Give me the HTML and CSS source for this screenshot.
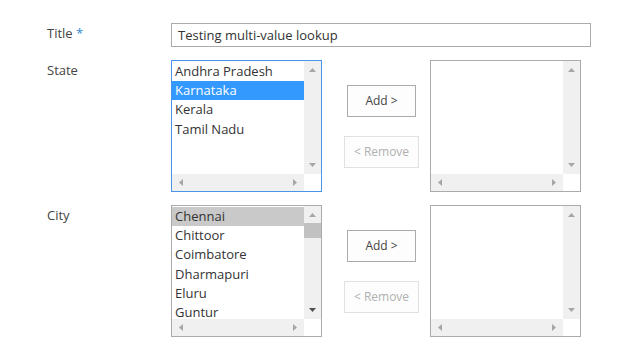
FILE: index.html
```html
<!DOCTYPE html>
<html>
<head>
<meta charset="utf-8">
<link rel="stylesheet" href="styles.css">
</head>
<body>
<div class="form">
  <div class="label label-title">Title <span class="req">*</span></div>
  <div class="field"><div class="textbox">Testing multi-value lookup</div></div>

  <div class="label">State</div>
  <div class="field picker">
    <div class="listbox focused">
      <div class="items">
        <div class="item">Andhra Pradesh</div>
        <div class="item sel-blue">Karnataka</div>
        <div class="item">Kerala</div>
        <div class="item">Tamil Nadu</div>
      </div>
      <div class="vbar">
        <svg class="arr" width="9" height="6" viewBox="0 0 9 6"><polygon points="4.5,1 8,5 1,5" fill="#a6a6a6"/></svg>
        <div class="track"></div>
        <svg class="arr" width="9" height="6" viewBox="0 0 9 6"><polygon points="1,1 8,1 4.5,5" fill="#a6a6a6"/></svg>
      </div>
      <div class="hbar">
        <svg class="arr" width="6" height="9" viewBox="0 0 6 9"><polygon points="1,4.5 5,1 5,8" fill="#a6a6a6"/></svg>
        <svg class="arr" width="6" height="9" viewBox="0 0 6 9"><polygon points="1,1 5,4.5 1,8" fill="#a6a6a6"/></svg>
      </div>
      <div class="corner"></div>
    </div>
    <div class="buttons">
      <div class="btn add">Add &gt;</div>
      <div class="btn remove">&lt; Remove</div>
    </div>
    <div class="listbox">
      <div class="items"></div>
      <div class="vbar">
        <svg class="arr" width="9" height="6" viewBox="0 0 9 6"><polygon points="4.5,1 8,5 1,5" fill="#a6a6a6"/></svg>
        <div class="track"></div>
        <svg class="arr" width="9" height="6" viewBox="0 0 9 6"><polygon points="1,1 8,1 4.5,5" fill="#a6a6a6"/></svg>
      </div>
      <div class="hbar">
        <svg class="arr" width="6" height="9" viewBox="0 0 6 9"><polygon points="1,4.5 5,1 5,8" fill="#a6a6a6"/></svg>
        <svg class="arr" width="6" height="9" viewBox="0 0 6 9"><polygon points="1,1 5,4.5 1,8" fill="#a6a6a6"/></svg>
      </div>
      <div class="corner"></div>
    </div>
  </div>

  <div class="label">City</div>
  <div class="field picker">
    <div class="listbox">
      <div class="items">
        <div class="item sel-gray">Chennai</div>
        <div class="item">Chittoor</div>
        <div class="item">Coimbatore</div>
        <div class="item">Dharmapuri</div>
        <div class="item">Eluru</div>
        <div class="item">Guntur</div>
      </div>
      <div class="vbar">
        <svg class="arr" width="9" height="6" viewBox="0 0 9 6"><polygon points="4.5,1 8,5 1,5" fill="#a6a6a6"/></svg>
        <div class="track"><div class="thumb"></div></div>
        <svg class="arr" width="9" height="6" viewBox="0 0 9 6"><polygon points="1,1 8,1 4.5,5" fill="#505050"/></svg>
      </div>
      <div class="hbar">
        <svg class="arr" width="6" height="9" viewBox="0 0 6 9"><polygon points="1,4.5 5,1 5,8" fill="#a6a6a6"/></svg>
        <svg class="arr" width="6" height="9" viewBox="0 0 6 9"><polygon points="1,1 5,4.5 1,8" fill="#a6a6a6"/></svg>
      </div>
      <div class="corner"></div>
    </div>
    <div class="buttons">
      <div class="btn add">Add &gt;</div>
      <div class="btn remove">&lt; Remove</div>
    </div>
    <div class="listbox">
      <div class="items"></div>
      <div class="vbar">
        <svg class="arr" width="9" height="6" viewBox="0 0 9 6"><polygon points="4.5,1 8,5 1,5" fill="#a6a6a6"/></svg>
        <div class="track"></div>
        <svg class="arr" width="9" height="6" viewBox="0 0 9 6"><polygon points="1,1 8,1 4.5,5" fill="#a6a6a6"/></svg>
      </div>
      <div class="hbar">
        <svg class="arr" width="6" height="9" viewBox="0 0 6 9"><polygon points="1,4.5 5,1 5,8" fill="#a6a6a6"/></svg>
        <svg class="arr" width="6" height="9" viewBox="0 0 6 9"><polygon points="1,1 5,4.5 1,8" fill="#a6a6a6"/></svg>
      </div>
      <div class="corner"></div>
    </div>
  </div>
</div>
</body>
</html>
```

FILE: styles.css
```css
html, body {
  margin: 0;
  padding: 0;
  background: #ffffff;
}
body {
  font-family: "Open Sans", "Noto Sans", "Liberation Sans", sans-serif;
  color: #333333;
}
.form {
  display: grid;
  grid-template-columns: 124px auto;
  row-gap: 13px;
  padding: 23px 0 0 47px;
}
.label {
  font-size: 13px;
  color: #444444;
  line-height: 20px;
}
.req {
  color: #2b88d8;
}
.textbox {
  width: 412px;
  height: 22px;
  border: 1px solid #ababab;
  font-size: 13px;
  line-height: 22px;
  padding: 0 0 0 6px;
  color: #333333;
}
.picker {
  display: flex;
  align-items: flex-start;
}
.listbox {
  width: 149px;
  height: 130px;
  border: 1px solid #ababab;
  display: grid;
  grid-template-columns: 132px 17px;
  grid-template-rows: 113px 17px;
  background: #ffffff;
}
.listbox.focused {
  border-color: #4a95ea;
}
.items {
  overflow: hidden;
  font-size: 13px;
  line-height: 19.2px;
  color: #333333;
  padding-top: 1px;
}
.item {
  padding-left: 3px;
  white-space: nowrap;
}
.sel-blue {
  background: #3399ff;
  color: #ffffff;
}
.sel-gray {
  background: #c9c9c9;
  color: #333333;
}
.vbar {
  background: #f0f0f0;
  display: flex;
  flex-direction: column;
  align-items: center;
}
.vbar .arr {
  flex: none;
  margin: 6px 0;
}
.track {
  flex: 1;
  width: 100%;
}
.thumb {
  margin-top: -1px;
  height: 15px;
  background: #c1c1c1;
}
.hbar {
  background: #f0f0f0;
  display: flex;
  justify-content: space-between;
  align-items: center;
  padding: 0 6px;
}
.corner {
  background: #ffffff;
}
.buttons {
  display: flex;
  flex-direction: column;
  align-items: center;
  width: 75px;
  margin: 25px 11px 0 22px;
  gap: 19px;
}
.btn {
  box-sizing: border-box;
  height: 32px;
  font-size: 12px;
  line-height: 30px;
  text-align: center;
  background: #fdfdfd;
}
.add {
  width: 69px;
  border: 1px solid #ababab;
  color: #444444;
}
.remove {
  width: 75px;
  border: 1px solid #e1e1e1;
  color: #b1b1b1;
}
```
